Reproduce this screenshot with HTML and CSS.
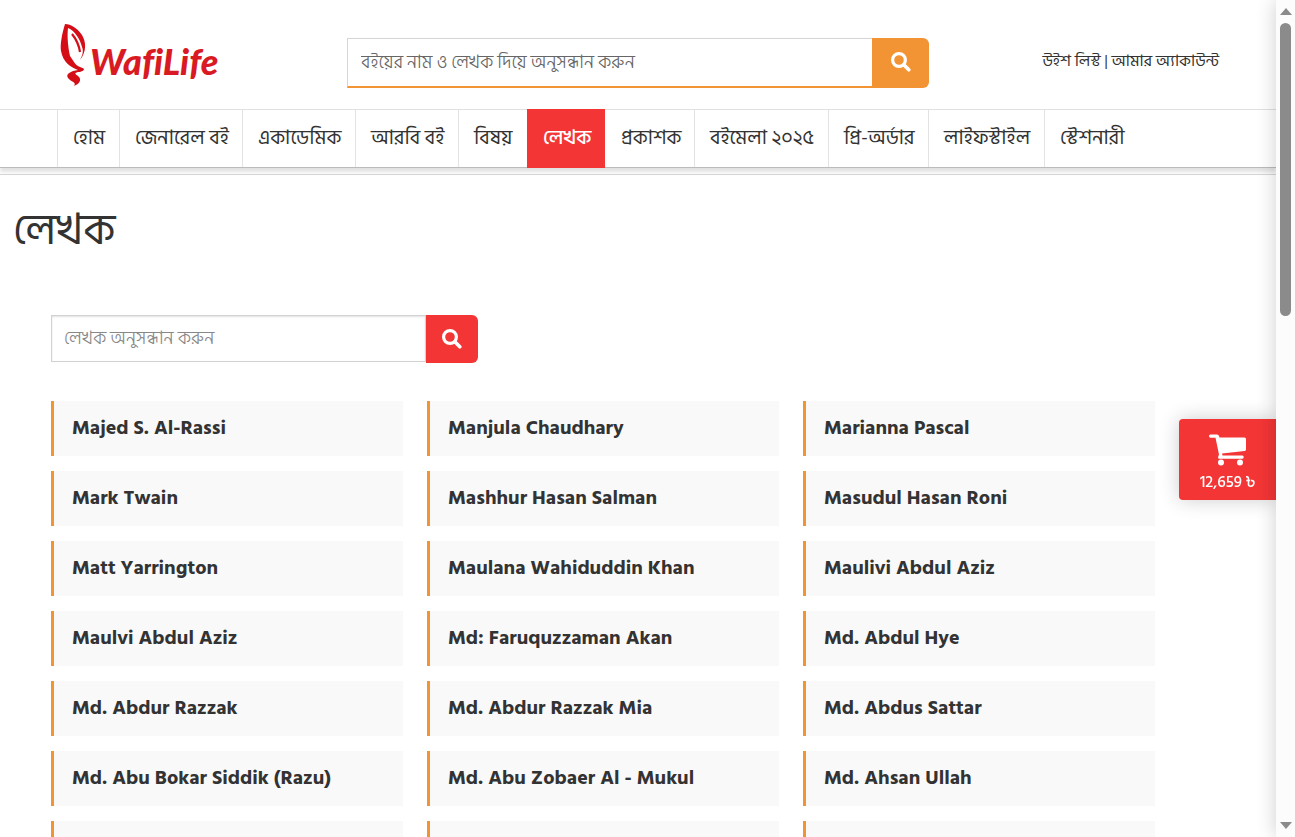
FILE: index.html
```html
<!DOCTYPE html>
<html lang="bn">
<head>
<meta charset="utf-8">
<meta name="viewport" content="width=device-width, initial-scale=1">
<title>লেখক - WafiLife</title>
<link rel="stylesheet" href="styles.css">
</head>
<body>
<svg class="sprite" aria-hidden="true">
  <symbol id="search" viewBox="0 0 20 20"><circle cx="8" cy="8" r="6.400" fill="none" stroke="currentColor" stroke-width="3.200"/><path d="M12.800 12.800L17.800 17.800" stroke="currentColor" stroke-width="3.600" stroke-linecap="round"/></symbol>
</svg>
<div class="page">
  <header class="header">
    <div class="topbar">
      <a class="logo" href="#" aria-label="WafiLife">
        <svg viewBox="0 0 160 70" width="160" height="70" aria-hidden="true">
          <path d="M5 4C2 14 0 24 1 31C3 42 10 47 18 50C11 51 5 54 8 58C11 62 17 62 14 66C20 64 22 59 18 56C15 54 14 53 18 52C22 52 24 50 24 49C22 47 17 47 14 42L10 36C8 27 7 16 8 8C15 11 20 19 22 27C24 32 22 36 20 40C27 31 26 22 22 15C17 8 11 4 5 4Z" fill="#d40d17"/>
          <path d="M12 14C16 19 19 25 20 32" fill="none" stroke="#d40d17" stroke-width="2.200"/>
          <text class="logo-text" x="30" y="55">WafiLife</text>
        </svg>
      </a>
      <form class="site-search">
        <input type="search" aria-label="বই অনুসন্ধান" placeholder="বইয়ের নাম ও লেখক দিয়ে অনুসন্ধান করুন">
        <button type="button" aria-label="অনুসন্ধান"><svg><use href="#search"/></svg></button>
      </form>
      <div class="account"><a href="#">উইশ লিস্ট</a> | <a href="#">আমার অ্যাকাউন্ট</a></div>
    </div>
    <nav class="nav">
      <a href="#">হোম</a>
      <a href="#">জেনারেল বই</a>
      <a href="#">একাডেমিক</a>
      <a href="#">আরবি বই</a>
      <a href="#">বিষয়</a>
      <a href="#" class="active">লেখক</a>
      <a href="#">প্রকাশক</a>
      <a href="#">বইমেলা ২০২৫</a>
      <a href="#">প্রি-অর্ডার</a>
      <a href="#">লাইফস্টাইল</a>
      <a href="#">স্টেশনারী</a>
    </nav>
  </header>
  <main class="main">
    <h1>লেখক</h1>
    <div class="content">
      <form class="author-search">
        <input type="search" aria-label="লেখক অনুসন্ধান" placeholder="লেখক অনুসন্ধান করুন">
        <button type="button" aria-label="অনুসন্ধান"><svg><use href="#search"/></svg></button>
      </form>
      <div class="authors">
        <a href="#">Majed S. Al-Rassi</a>
        <a href="#">Manjula Chaudhary</a>
        <a href="#">Marianna Pascal</a>
        <a href="#">Mark Twain</a>
        <a href="#">Mashhur Hasan Salman</a>
        <a href="#">Masudul Hasan Roni</a>
        <a href="#">Matt Yarrington</a>
        <a href="#">Maulana Wahiduddin Khan</a>
        <a href="#">Maulivi Abdul Aziz</a>
        <a href="#">Maulvi Abdul Aziz</a>
        <a href="#">Md: Faruquzzaman Akan</a>
        <a href="#">Md. Abdul Hye</a>
        <a href="#">Md. Abdur Razzak</a>
        <a href="#">Md. Abdur Razzak Mia</a>
        <a href="#">Md. Abdus Sattar</a>
        <a href="#">Md. Abu Bokar Siddik (Razu)</a>
        <a href="#">Md. Abu Zobaer Al - Mukul</a>
        <a href="#">Md. Ahsan Ullah</a>
        <a href="#" aria-hidden="true"></a>
        <a href="#" aria-hidden="true"></a>
        <a href="#" aria-hidden="true"></a>
      </div>
    </div>
  </main>
</div>
<a class="cart" href="#">
  <svg viewBox="0 0 38 32" width="38" height="32" aria-hidden="true"><path d="M1.500 .5H8q1.500 0 2 1.500l.5 1.500h25q1.500 0 1.500 1.500v10.500q0 1.200-1.300 1.400L13 19.500l.5 2h20q1.200 0 1.200 1.600t-1.200 1.600H10.500q-1.500 0-1.500-1.500l1-2.700L6.500 3.700h-5Q0 3.700 0 2.100T1.500 .5Z" fill="#fff"/><circle cx="12" cy="28.500" r="3" fill="#fff"/><circle cx="31" cy="28.500" r="3" fill="#fff"/></svg>
  <span>12,659 ৳</span>
</a>
<div class="scrollbar" aria-hidden="true">
  <svg viewBox="0 0 12 7"><path d="M6 0L12 7H0Z"/></svg>
  <div class="track"><div class="thumb"></div></div>
  <svg viewBox="0 0 12 7"><path d="M0 0H12L6 7Z"/></svg>
</div>
</body>
</html>
```
FILE: styles.css
```css
* { box-sizing: border-box; }
html, body { height: 100%; overflow: hidden; }
body {
  margin: 0;
  background: #fff;
  color: #333;
  font-family: "Hind Siliguri", "Noto Sans Bengali", "Noto Sans", sans-serif;
}
a { color: inherit; text-decoration: none; }
input, button { font-family: inherit; margin: 0; }
.sprite { position: absolute; width: 0; height: 0; }
.page { height: 100%; overflow: hidden; padding-right: 19px; }

.header { border-bottom: 1px solid #d9d9d9; padding-bottom: 6px; }
.topbar {
  display: grid;
  grid-template-columns: 290px minmax(0, 582px) 1fr;
  height: 109px;
  padding: 0 57px;
}
.logo { padding: 20px 0 0 3px; }
.logo svg { display: block; overflow: visible; }
.logo-text { font: italic 900 36px Lato, sans-serif; font-variant-ligatures: none; fill: #d91a23; }
.site-search { display: flex; height: 50px; margin-top: 38px; }
.site-search input {
  flex: 1;
  min-width: 0;
  padding: 0 13px;
  border: 1px solid #d5d5d5;
  border-right: 0;
  border-bottom: 2px solid #f29434;
  border-radius: 0;
  font-size: 18px;
  font-weight: 300;
  outline: 0;
}
input::placeholder { color: #666; opacity: 1; }
.site-search button, .author-search button {
  display: flex;
  align-items: center;
  justify-content: center;
  padding: 0 0 3px;
  border: 0;
  border-radius: 0 6px 6px 0;
  color: #fff;
}
.site-search button { width: 57px; background: #f29434; }
button svg { width: 20px; height: 20px; }
.account { justify-self: end; padding-top: 49px; font-size: 16px; line-height: 24px; white-space: nowrap; }

.nav {
  display: grid;
  grid-template-columns: 62px 123px 113px 103px 69px 78px 89px 134px 100px 116px 96px;
  padding-left: 57px;
  border-top: 1px solid #e0e0e0;
  border-bottom: 1px solid #bbb;
  box-shadow: 0 4px 4px rgba(0, 0, 0, .12);
  font-size: 20px;
  line-height: 28px;
  white-space: nowrap;
}
.nav a { height: 57px; padding: 14px 0 0 15px; border-left: 1px solid #e3e3e3; }
.nav .active { height: 59px; margin: -1px 0; padding-top: 15px; border-color: #f33535; background: #f33535; color: #fff; font-weight: 500; }
.nav .active + a { border-left-color: transparent; }

h1 { margin: 29px 0 0 13px; font-size: 43px; line-height: 54px; font-weight: 400; }
.content { padding: 57px 121px 0 51px; }
.author-search { display: flex; width: 427px; height: 48px; }
.author-search input {
  flex: 1;
  min-width: 0;
  height: 47px;
  padding: 0 12px;
  border: 1px solid #d2d2d2;
  border-radius: 0;
  box-shadow: inset 0 1px 2px rgba(0, 0, 0, .12);
  font-size: 18px;
  font-weight: 300;
  outline: 0;
}
.author-search input::placeholder { color: #888; }
.author-search button { width: 52px; padding: 0; background: #f33535; }
.authors {
  display: grid;
  grid-template-columns: repeat(3, minmax(0, 1fr));
  gap: 15px 24px;
  margin-top: 38px;
}
.authors a {
  height: 55px;
  padding: 13px 18px;
  border-left: 3px solid #f29434;
  background: #f9f9f9;
  font-size: 20px;
  line-height: 28px;
  font-weight: 700;
  white-space: nowrap;
}

.cart {
  position: fixed;
  top: 419px;
  right: 19px;
  display: flex;
  flex-direction: column;
  align-items: center;
  width: 97px;
  height: 81px;
  padding-top: 15px;
  border-radius: 4px 0 0 4px;
  background: #f33535;
  box-shadow: 0 0 20px rgba(0, 0, 0, .2);
  color: #fff;
  font-size: 16px;
  line-height: 20px;
  font-weight: 500;
}
.cart span { padding-top: 6px; }
.scrollbar {
  position: fixed;
  top: 0;
  right: 0;
  bottom: 0;
  display: flex;
  flex-direction: column;
  align-items: center;
  gap: 8px;
  width: 19px;
  padding: 8px 0;
  background: #fcfcfc;
  box-shadow: 0 0 20px rgba(0, 0, 0, .2);
}
.scrollbar svg { width: 12px; height: 7px; fill: #8b8b8b; }
.track { flex: 1; }
.thumb { width: 11px; height: 37%; border-radius: 6px; background: #8b8b8b; }
```
